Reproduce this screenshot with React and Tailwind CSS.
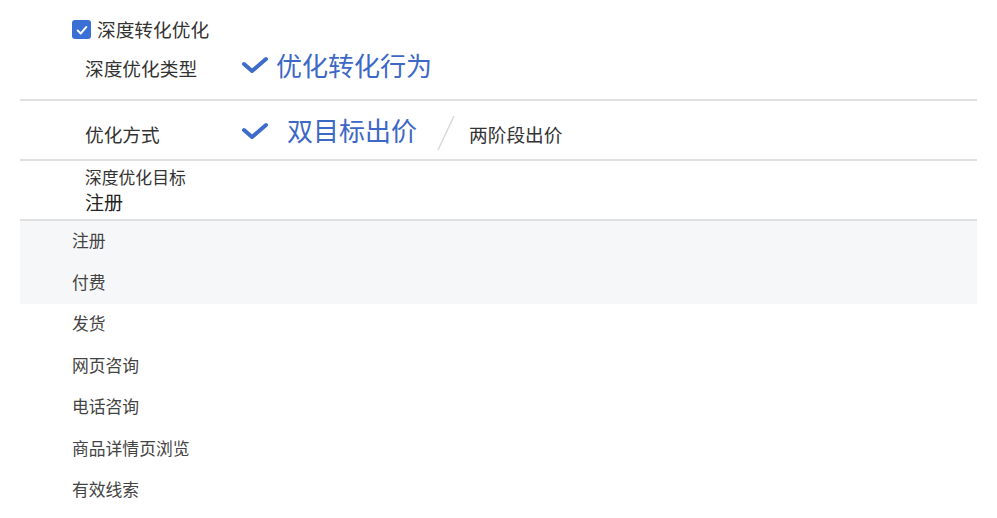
export default function App() {
  const items = ['注册', '付费', '发货', '网页咨询', '电话咨询', '商品详情页浏览', '有效线索'];
  const font = { fontFamily: '"Noto Sans CJK SC", "Noto Sans", sans-serif' };

  const Check = ({ className }) => (
    <svg viewBox="0 0 28 18" className={className} fill="none">
      <polyline points="3,8 11,15 25,3" stroke="#3d6ccb" strokeWidth="4" strokeLinecap="round" strokeLinejoin="round" />
    </svg>
  );

  return (
    <div className="w-[997px] h-[518px] bg-white overflow-hidden text-[#333]" style={font}>
      <div className="px-[20px]">
        {/* checkbox row */}
        <div className="h-[39px] pt-[20px] pl-[52px] flex items-center gap-[6px]">
          <div className="w-[19px] h-[19px] rounded-[3px] bg-[#3a6fd6] flex items-center justify-center">
            <svg viewBox="0 0 16 16" className="w-[14px] h-[14px]" fill="none">
              <polyline points="3,8.5 6.5,12 13,4.5" stroke="white" strokeWidth="2.2" strokeLinecap="round" strokeLinejoin="round" />
            </svg>
          </div>
          <span className="text-[18.7px] leading-none">深度转化优化</span>
        </div>

        {/* 深度优化类型 */}
        <div className="h-[62px] flex items-center pl-[65px] pb-[8px] border-b-2 border-[#e0e0e0]">
          <span className="text-[18.7px] w-[156px] leading-none mt-[6px]">深度优化类型</span>
          <Check className="w-[28px] h-[18px] mr-[7px]" />
          <span className="text-[26px] leading-none text-[#3d68c6]">优化转化行为</span>
        </div>

        {/* 优化方式 */}
        <div className="h-[60px] flex items-center pl-[65px] border-b-2 border-[#e0e0e0]">
          <span className="text-[18.7px] w-[156px] leading-none mt-[8px]">优化方式</span>
          <Check className="w-[28px] h-[18px] mr-[18px] mt-[2px]" />
          <span className="text-[26px] leading-none text-[#3d68c6]">双目标出价</span>
          <svg viewBox="0 0 20 36" className="w-[20px] h-[36px] ml-[19px] mr-[13px] mt-[6px]">
            <line x1="18" y1="1" x2="2" y2="35" stroke="#d8d8d8" strokeWidth="1.5" />
          </svg>
          <span className="text-[18.7px] leading-none mt-[8px]">两阶段出价</span>
        </div>

        {/* 深度优化目标 */}
        <div className="h-[60px] pl-[65px] pt-[5px] flex flex-col border-b-2 border-[#e0e0e0]">
          <span className="text-[16.8px] leading-[22px]">深度优化目标</span>
          <span className="text-[19px] leading-[25px] mt-[1px] text-[#222]">注册</span>
        </div>

        {/* list */}
        <div className="flex flex-col">
          {items.map((t, i) => (
            <div
              key={t}
              className={`h-[41.5px] flex items-center pl-[52px] pb-[2px] text-[16.8px] text-[#444] ${i < 2 ? 'bg-[#f6f7f9]' : ''}`}
            >
              {t}
            </div>
          ))}
        </div>
      </div>
    </div>
  );
}
